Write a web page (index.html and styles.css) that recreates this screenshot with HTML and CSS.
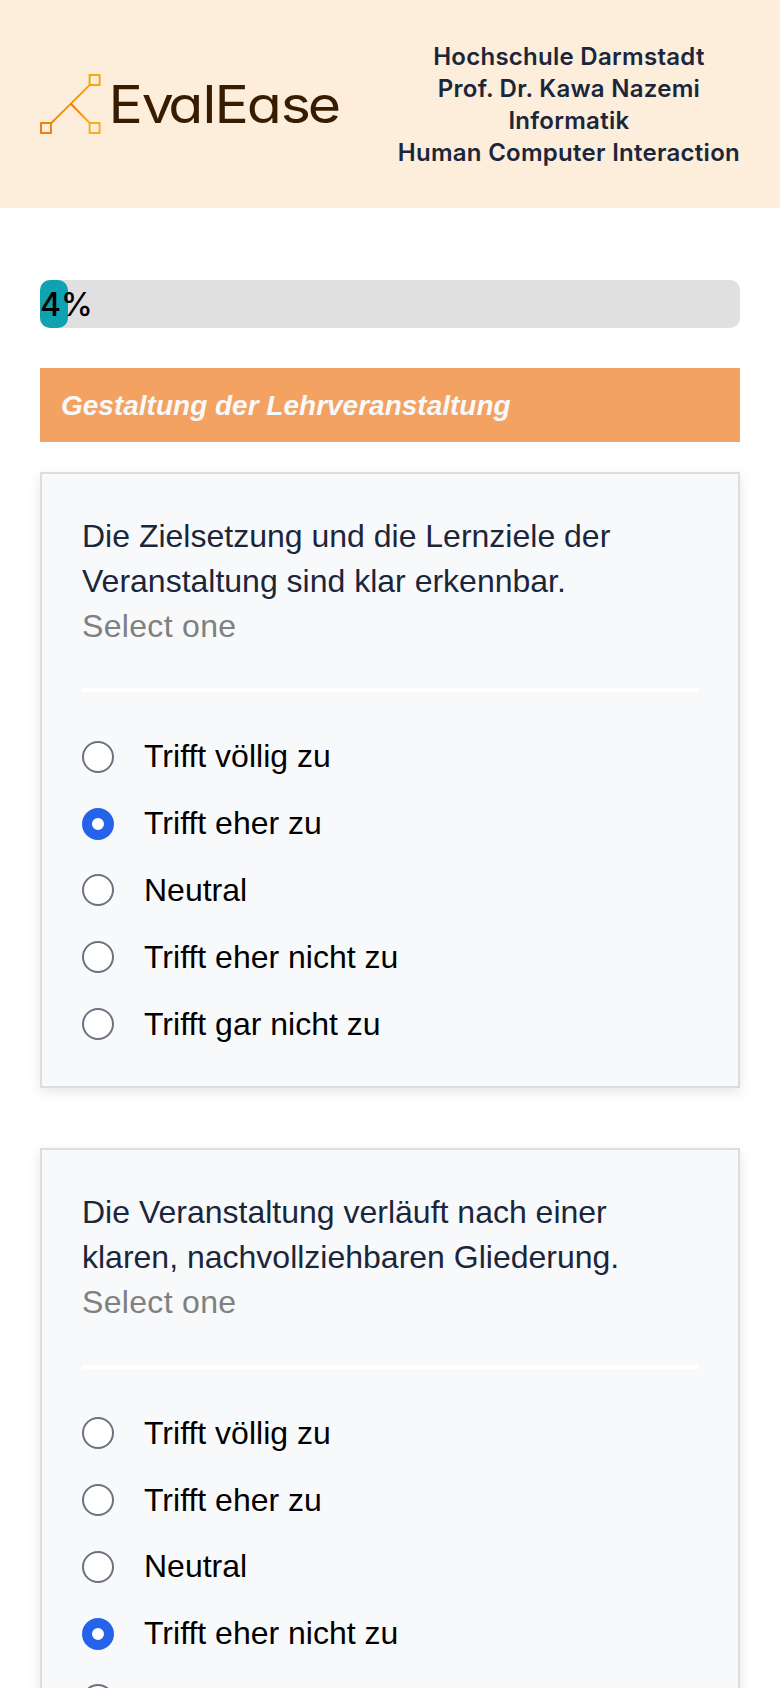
FILE: index.html
```html
<!DOCTYPE html>
<html lang="de">
<head>
<meta charset="utf-8">
<title>EvalEase</title>
<link rel="stylesheet" href="styles.css">
</head>
<body>
<header class="header">
  <svg class="logo" width="302" height="60" viewBox="0 0 302 60" aria-label="EvalEase">
    <defs>
      <linearGradient id="g" gradientUnits="userSpaceOnUse" x1="0" y1="60" x2="60" y2="0">
        <stop offset="0" stop-color="#f07800"/><stop offset="1" stop-color="#f9a800"/>
      </linearGradient>
      <linearGradient id="h" gradientUnits="userSpaceOnUse" x1="30" y1="30" x2="60" y2="60">
        <stop offset="0" stop-color="#ee7000"/><stop offset=".6" stop-color="#f9a81a"/>
      </linearGradient>
    </defs>
    <g fill="none" stroke="url(#g)" stroke-width="1.9">
      <rect x="1" y="49" width="10" height="10"/>
      <rect x="49.6" y="1" width="10" height="10"/>
      <path d="M11 49.4 49.8 10.8"/>
    </g>
    <g fill="none" stroke="url(#h)" stroke-width="1.9">
      <path d="M31 30 50 49.4"/>
      <rect x="49.6" y="49" width="10" height="10"/>
    </g>
    <text class="wordmark" transform="scale(1.1 1)" y="49.3" x="62.3 92.5 116.7 147.7 158.6 187.9 218.9 243.4">EvalEase</text>
  </svg>
  <div class="course">
    <div>Hochschule Darmstadt</div>
    <div>Prof. Dr. Kawa Nazemi</div>
    <div>Informatik</div>
    <div>Human Computer Interaction</div>
  </div>
</header>
<main class="main">
  <div class="progress"><div class="progress-fill" style="width:4%">4%</div></div>
  <h2 class="section">Gestaltung der Lehrveranstaltung</h2>
  <section class="card">
    <div class="question">Die Zielsetzung und die Lernziele der Veranstaltung sind klar erkennbar.</div>
    <div class="hint">Select one</div>
    <hr class="rule">
    <div class="options">
      <label class="option"><input class="radio" type="radio" name="q1">Trifft völlig zu</label>
      <label class="option"><input class="radio" type="radio" name="q1" checked>Trifft eher zu</label>
      <label class="option"><input class="radio" type="radio" name="q1">Neutral</label>
      <label class="option"><input class="radio" type="radio" name="q1">Trifft eher nicht zu</label>
      <label class="option"><input class="radio" type="radio" name="q1">Trifft gar nicht zu</label>
    </div>
  </section>
  <section class="card">
    <div class="question">Die Veranstaltung verläuft nach einer klaren, nachvollziehbaren Gliederung.</div>
    <div class="hint">Select one</div>
    <hr class="rule">
    <div class="options">
      <label class="option"><input class="radio" type="radio" name="q2">Trifft völlig zu</label>
      <label class="option"><input class="radio" type="radio" name="q2">Trifft eher zu</label>
      <label class="option"><input class="radio" type="radio" name="q2">Neutral</label>
      <label class="option"><input class="radio" type="radio" name="q2" checked>Trifft eher nicht zu</label>
      <label class="option"><input class="radio" type="radio" name="q2">Trifft gar nicht zu</label>
    </div>
  </section>
</main>
</body>
</html>
```
FILE: styles.css
```css
* { box-sizing: border-box; }
body {
  margin: 0;
  height: 1688px;
  overflow: hidden;
  background: #fff;
  font-family: "Liberation Sans", Arial, sans-serif;
}
.header {
  display: flex;
  justify-content: space-between;
  align-items: center;
  height: 208px;
  padding: 0 40px;
  background: #fdeddb;
}
.logo { display: block; overflow: visible; }
.wordmark {
  font-family: Inter, sans-serif;
  font-size: 52px;
  font-weight: 400;
  font-feature-settings: "cv11";
  fill: #381c00;
}
.course {
  padding-top: 2px;
  font: 600 24px/32px Inter, sans-serif;
  letter-spacing: 0.27px;
  text-align: center;
  color: #1b263b;
}
.main { padding: 72px 40px 0; }
.progress {
  height: 48px;
  border-radius: 10px;
  background: #e0e0e0;
}
.progress-fill {
  height: 48px;
  border-radius: 10px;
  background: #0fa3b1;
  font: 500 32px/50px Inter, sans-serif;
  white-space: nowrap;
  color: #000;
}
.section {
  margin: 40px 0 30px;
  height: 74px;
  padding-left: 21px;
  background: #f4a261;
  color: #f8f9fb;
  font-size: 28px;
  font-style: italic;
  font-weight: 700;
  line-height: 75px;
}
.card {
  margin-bottom: 60px;
  padding: 40px;
  border: 2px solid #dcdddf;
  background: #f8f9fb;
  box-shadow: 0 4px 12px rgba(0, 0, 0, .1);
  font-size: 32px;
  line-height: 44.8px;
}
.question { color: #1b263b; }
.hint {
  color: #808080;
  letter-spacing: 0.32px;
}
.rule {
  height: 4px;
  margin: 40px 0 42px;
  border: 0;
  background: #fff;
}
.options {
  display: flex;
  flex-direction: column;
  gap: 22px;
}
.option {
  display: flex;
  align-items: center;
  gap: 30px;
  color: #000;
}
.radio {
  appearance: none;
  flex: none;
  width: 32px;
  height: 32px;
  margin: 0;
  border: 2px solid #6b7280;
  border-radius: 50%;
  background: #fff;
}
.radio:checked {
  border: 10px solid #2563eb;
}
```
